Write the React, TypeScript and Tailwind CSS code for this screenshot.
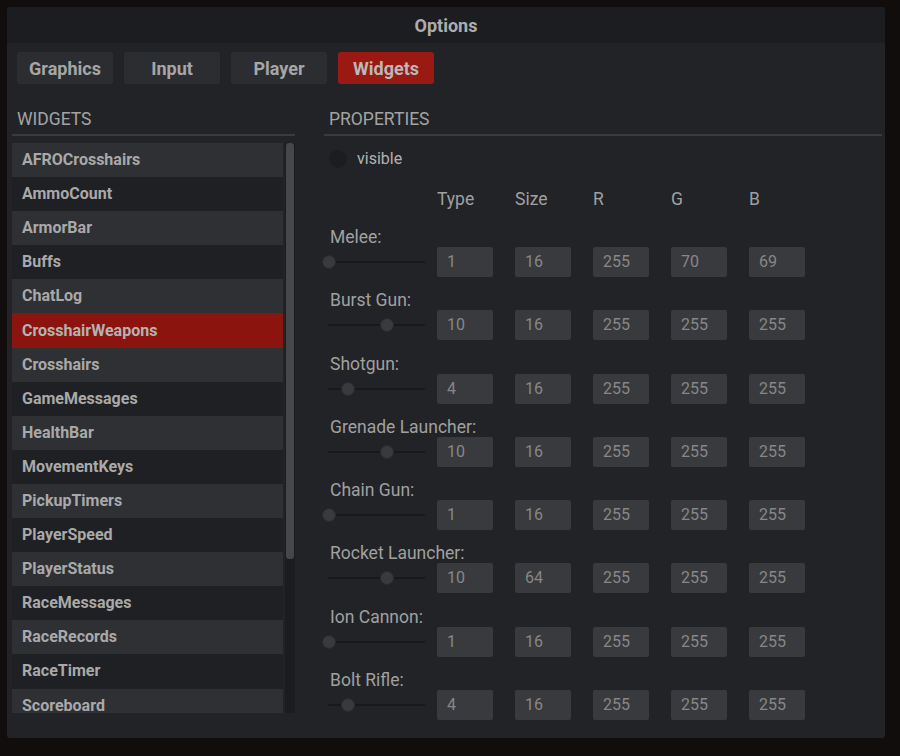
import React from "react";

interface WeaponRow {
  name: string;
  type: number;
  size: number;
  r: number;
  g: number;
  b: number;
}

const tabs = ["Graphics", "Input", "Player", "Widgets"];

const widgets = [
  "AFROCrosshairs",
  "AmmoCount",
  "ArmorBar",
  "Buffs",
  "ChatLog",
  "CrosshairWeapons",
  "Crosshairs",
  "GameMessages",
  "HealthBar",
  "MovementKeys",
  "PickupTimers",
  "PlayerSpeed",
  "PlayerStatus",
  "RaceMessages",
  "RaceRecords",
  "RaceTimer",
  "Scoreboard",
];

const weapons: WeaponRow[] = [
  { name: "Melee:", type: 1, size: 16, r: 255, g: 70, b: 69 },
  { name: "Burst Gun:", type: 10, size: 16, r: 255, g: 255, b: 255 },
  { name: "Shotgun:", type: 4, size: 16, r: 255, g: 255, b: 255 },
  { name: "Grenade Launcher:", type: 10, size: 16, r: 255, g: 255, b: 255 },
  { name: "Chain Gun:", type: 1, size: 16, r: 255, g: 255, b: 255 },
  { name: "Rocket Launcher:", type: 10, size: 64, r: 255, g: 255, b: 255 },
  { name: "Ion Cannon:", type: 1, size: 16, r: 255, g: 255, b: 255 },
  { name: "Bolt Rifle:", type: 4, size: 16, r: 255, g: 255, b: 255 },
];

function Slider({ value }: { value: number }) {
  // thumb centre moves ~6.44px per type step
  const left = (value - 1) * 6.44;
  return (
    <div className="relative w-[110px] h-[30px]">
      <div className="absolute left-[6px] w-[97px] top-[14px] h-[2px] bg-[#18191b]" />
      <div
        className="absolute top-[8px] w-[14px] h-[14px] rounded-full bg-[#393a3e] border border-[#2a2b2e]"
        style={{ left: `${left}px` }}
      />
    </div>
  );
}

function Field({ value }: { value: number }) {
  return (
    <div className="w-[56px] h-[30px] rounded-[2px] bg-[#393a3e] pl-[10px] flex items-center text-[16px] text-[#878787]">
      {value}
    </div>
  );
}

export default function App() {
  return (
    <div
      className="w-[900px] h-[756px] bg-[#110d0d] pt-[7px] pl-[7px] overflow-hidden"
      style={{ fontFamily: "Roboto, 'Liberation Sans', sans-serif" }}
    >
      <div className="w-[878px] h-[731px] bg-[#222327] rounded-[3px] overflow-hidden">
        <div className="h-[36px] bg-[#1c1d20] flex items-center justify-center text-[18px] font-bold text-[#adadad]">
          Options
        </div>

        <div className="flex gap-[11px] pl-[10px] pt-[9px]">
          {tabs.map((t) => (
            <div
              key={t}
              className={
                t === "Widgets"
                  ? "w-[96px] h-[32px] rounded-[3px] bg-[#9a1913] flex items-center justify-center text-[18px] font-bold text-[#b9b9b9]"
                  : "w-[96px] h-[32px] rounded-[3px] bg-[#2c2d31] flex items-center justify-center text-[18px] font-bold text-[#a6a6a6]"
              }
            >
              {t}
            </div>
          ))}
        </div>

        <div className="flex">
          <div className="ml-[5px] w-[283px]">
            <div className="pt-[26px] pb-[5px] pl-[5px] border-b-2 border-[#3a3b3f] text-[17.5px] leading-[19px] text-[#a3a3a3]">
              WIDGETS
            </div>
            <div className="mt-[7px] flex h-[570px] overflow-hidden">
              <div className="w-[271px]">
                {widgets.map((w, i) => (
                  <div
                    key={w}
                    className={
                      w === "CrosshairWeapons"
                        ? "h-[34.1px] pl-[10px] flex items-center bg-[#8b150e] text-[16px] font-bold text-[#b3b3b3]"
                        : i % 2 === 0
                          ? "h-[34.1px] pl-[10px] flex items-center bg-[#2f3034] text-[16px] font-bold text-[#a9a9a9]"
                          : "h-[34.1px] pl-[10px] flex items-center bg-[#1f2023] text-[16px] font-bold text-[#a9a9a9]"
                    }
                  >
                    {w}
                  </div>
                ))}
              </div>
              <div className="ml-[2px] w-[10px] bg-[#1b1c1f] rounded-[2px]">
                <div className="mx-[1px] h-[416px] rounded-[3px] bg-[#46474b]" />
              </div>
            </div>
          </div>

          <div className="ml-[27px] w-[560px]">
            <div className="ml-[2px] pt-[26px] pb-[5px] pl-[5px] border-b-2 border-[#3a3b3f] text-[17.5px] leading-[19px] text-[#a3a3a3]">
              PROPERTIES
            </div>

            <div className="mt-[13px] ml-[7px] h-[20px] flex items-center gap-[10px]">
              <div className="w-[18px] h-[18px] rounded-full bg-[#1c1d1f]" />
              <span className="text-[16px] text-[#b2b2b2]">visible</span>
            </div>

            <div className="mt-[20px] flex h-[20px] items-center text-[17.5px] text-[#a0a0a0]">
              <div className="w-[115px]" />
              <div className="flex gap-[22px]">
                {["Type", "Size", "R", "G", "B"].map((h) => (
                  <div key={h} className="w-[56px]">
                    {h}
                  </div>
                ))}
              </div>
            </div>

            <div className="mt-[19px]">
              {weapons.map((wp) => (
                <div key={wp.name} className="h-[63.3px]">
                  <div className="pl-[8px] h-[19px] leading-[19px] text-[17.5px] text-[#a0a0a0] whitespace-nowrap">
                    {wp.name}
                  </div>
                  <div className="flex items-center">
                    <Slider value={wp.type} />
                    <div className="ml-[5px] flex gap-[22px]">
                      <Field value={wp.type} />
                      <Field value={wp.size} />
                      <Field value={wp.r} />
                      <Field value={wp.g} />
                      <Field value={wp.b} />
                    </div>
                  </div>
                </div>
              ))}
            </div>
          </div>
        </div>
      </div>
    </div>
  );
}
